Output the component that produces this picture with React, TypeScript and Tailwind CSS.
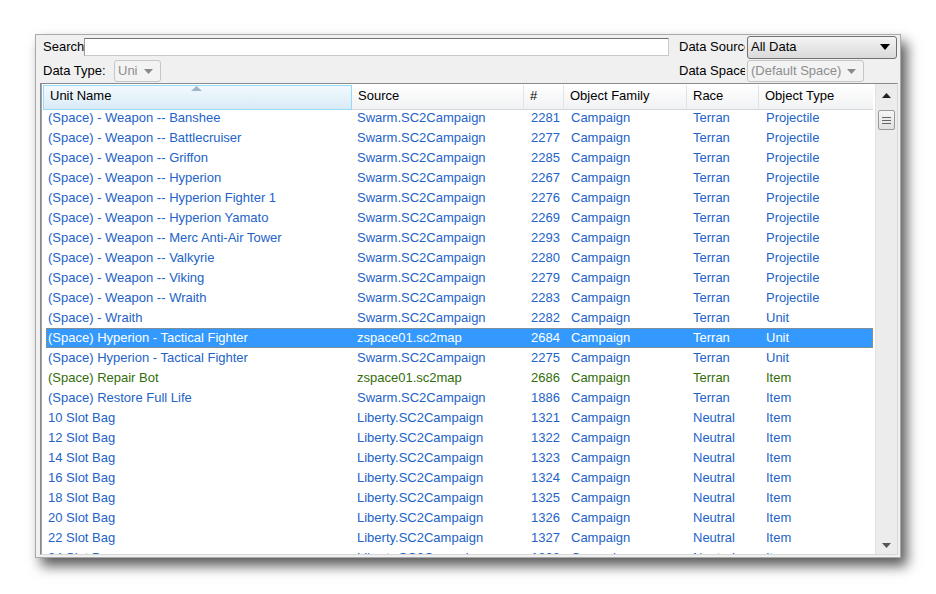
import React from "react"

type Row = {
  name: string
  source: string
  id: string
  family: string
  race: string
  type: string
  tone?: "green"
  selected?: boolean
}

const rows: Row[] = [
  { name: "(Space) - Weapon -- Banshee", source: "Swarm.SC2Campaign", id: "2281", family: "Campaign", race: "Terran", type: "Projectile" },
  { name: "(Space) - Weapon -- Battlecruiser", source: "Swarm.SC2Campaign", id: "2277", family: "Campaign", race: "Terran", type: "Projectile" },
  { name: "(Space) - Weapon -- Griffon", source: "Swarm.SC2Campaign", id: "2285", family: "Campaign", race: "Terran", type: "Projectile" },
  { name: "(Space) - Weapon -- Hyperion", source: "Swarm.SC2Campaign", id: "2267", family: "Campaign", race: "Terran", type: "Projectile" },
  { name: "(Space) - Weapon -- Hyperion Fighter 1", source: "Swarm.SC2Campaign", id: "2276", family: "Campaign", race: "Terran", type: "Projectile" },
  { name: "(Space) - Weapon -- Hyperion Yamato", source: "Swarm.SC2Campaign", id: "2269", family: "Campaign", race: "Terran", type: "Projectile" },
  { name: "(Space) - Weapon -- Merc Anti-Air Tower", source: "Swarm.SC2Campaign", id: "2293", family: "Campaign", race: "Terran", type: "Projectile" },
  { name: "(Space) - Weapon -- Valkyrie", source: "Swarm.SC2Campaign", id: "2280", family: "Campaign", race: "Terran", type: "Projectile" },
  { name: "(Space) - Weapon -- Viking", source: "Swarm.SC2Campaign", id: "2279", family: "Campaign", race: "Terran", type: "Projectile" },
  { name: "(Space) - Weapon -- Wraith", source: "Swarm.SC2Campaign", id: "2283", family: "Campaign", race: "Terran", type: "Projectile" },
  { name: "(Space) - Wraith", source: "Swarm.SC2Campaign", id: "2282", family: "Campaign", race: "Terran", type: "Unit" },
  { name: "(Space) Hyperion - Tactical Fighter", source: "zspace01.sc2map", id: "2684", family: "Campaign", race: "Terran", type: "Unit", selected: true },
  { name: "(Space) Hyperion - Tactical Fighter", source: "Swarm.SC2Campaign", id: "2275", family: "Campaign", race: "Terran", type: "Unit" },
  { name: "(Space) Repair Bot", source: "zspace01.sc2map", id: "2686", family: "Campaign", race: "Terran", type: "Item", tone: "green" },
  { name: "(Space) Restore Full Life", source: "Swarm.SC2Campaign", id: "1886", family: "Campaign", race: "Terran", type: "Item" },
  { name: "10 Slot Bag", source: "Liberty.SC2Campaign", id: "1321", family: "Campaign", race: "Neutral", type: "Item" },
  { name: "12 Slot Bag", source: "Liberty.SC2Campaign", id: "1322", family: "Campaign", race: "Neutral", type: "Item" },
  { name: "14 Slot Bag", source: "Liberty.SC2Campaign", id: "1323", family: "Campaign", race: "Neutral", type: "Item" },
  { name: "16 Slot Bag", source: "Liberty.SC2Campaign", id: "1324", family: "Campaign", race: "Neutral", type: "Item" },
  { name: "18 Slot Bag", source: "Liberty.SC2Campaign", id: "1325", family: "Campaign", race: "Neutral", type: "Item" },
  { name: "20 Slot Bag", source: "Liberty.SC2Campaign", id: "1326", family: "Campaign", race: "Neutral", type: "Item" },
  { name: "22 Slot Bag", source: "Liberty.SC2Campaign", id: "1327", family: "Campaign", race: "Neutral", type: "Item" },
  { name: "24 Slot Bag", source: "Liberty.SC2Campaign", id: "1328", family: "Campaign", race: "Neutral", type: "Item" },
]

const headCols = "grid grid-cols-[309px_172px_40px_123px_72px_115px]"
const rowCols = "grid grid-cols-[306px_172px_40px_123px_72px_115px]"

function Arrow({ color = "#000", w = 9, h = 5 }: { color?: string; w?: number; h?: number }) {
  return (
    <svg width={w} height={h} viewBox={`0 0 ${w} ${h}`}>
      <polygon points={`0,0 ${w},0 ${w / 2},${h}`} fill={color} />
    </svg>
  )
}

function Combo({ text, width }: { text: string; width: string }) {
  return (
    <div
      className={`${width} h-[22px] flex items-center justify-between pl-[3px] pr-[7px] rounded-[3px] border border-[#c3c6ca] bg-[#f3f3f3] text-[#8d8d8d] overflow-hidden whitespace-nowrap`}
    >
      <span className="overflow-hidden">{text}</span>
      <span className="ml-1 shrink-0">
        <Arrow color="#8a8a8a" w={9} h={5} />
      </span>
    </div>
  )
}

export default function App() {
  return (
    <div
      className="w-[936px] h-[594px] bg-white pt-[34px] pl-[35px] text-[13px] text-black"
      style={{ fontFamily: '"Liberation Sans", Arial, sans-serif' }}
    >
      <div className="w-[866px] h-[524px] bg-[#f0f0f0] border border-[#a9a9a9] shadow-[6px_8px_12px_rgba(0,0,0,0.65)] flex flex-col">
        {/* filters */}
        <div className="flex items-center h-[24px] pl-[7px]">
          <span className="w-[42px] overflow-hidden whitespace-nowrap">Search</span>
          <div className="-ml-[1px] w-[585px] h-[18px] bg-white border border-[#c8c8c8] border-t-[#707070] border-l-[#9a9a9a]" />
          <span className="ml-[10px] mr-[2px] w-[66px] overflow-hidden whitespace-nowrap">Data Source</span>
          <div className="w-[150px] h-[23px] flex items-center justify-between pl-[3px] pr-[6px] rounded-[3px] border border-[#707070] bg-gradient-to-b from-[#f4f4f4] to-[#dadada]">
            <span>All Data</span>
            <Arrow w={10} h={6} />
          </div>
        </div>
        <div className="flex items-center h-[24px] pl-[7px]">
          <span className="w-[71px] whitespace-nowrap">Data Type:</span>
          <Combo text="Uni" width="w-[47px]" />
          <span className="ml-[518px] mr-[2px] w-[66px] overflow-hidden whitespace-nowrap">Data Space</span>
          <Combo text="(Default Space)" width="w-[117px]" />
        </div>

        {/* list */}
        <div className="ml-[4px] mr-[2px] flex-1 border border-[#8a8a8a] border-r-[#d8d8d8] border-b-[#d8d8d8] bg-white flex overflow-hidden">
          <div className="flex-1 flex flex-col pl-[1px] border-l border-[#a0a0a0] overflow-hidden">
            <div className={`${headCols} h-[23px] mt-[1px] shrink-0`}>
              <div className="relative flex items-end pb-[3px] pl-[6px] bg-gradient-to-b from-[#f2f9fd] to-[#d9ebf7] border border-[#96d9f9]">
                Unit Name
                <span className="absolute left-[147px] top-[0px]">
                  <svg width="11" height="5" viewBox="0 0 11 5">
                    <polygon points="0,5 11,5 5.5,0" fill="#9db6c8" />
                  </svg>
                </span>
              </div>
              {["Source", "#", "Object Family", "Race", "Object Type"].map((h) => (
                <div
                  key={h}
                  className="flex items-end pb-[3px] pl-[6px] bg-gradient-to-b from-white to-[#f1f2f3] border-b border-[#d5d5d5] border-r border-r-[#e3e4e5]"
                >
                  {h}
                </div>
              ))}
            </div>
            <div className="flex flex-col pl-[3px]">
              {rows.map((r, i) => {
                const color = r.selected ? "text-white" : r.tone === "green" ? "text-[#326d0a]" : "text-[#2363c8]"
                return (
                  <div
                    key={i}
                    className={`${rowCols} h-[20px] items-center shrink-0 ${color} ${
                      r.selected ? "bg-[#3399ff] outline outline-1 outline-dotted outline-[#c9863c] -outline-offset-1" : ""
                    } whitespace-nowrap`}
                  >
                    <span className="pl-[2px]">{r.name}</span>
                    <span className="pl-[5px]">{r.source}</span>
                    <span className="pl-[7px]">{r.id}</span>
                    <span className="pl-[7px]">{r.family}</span>
                    <span className="pl-[6px]">{r.race}</span>
                    <span className="pl-[7px]">{r.type}</span>
                  </div>
                )
              })}
            </div>
          </div>

          {/* scrollbar */}
          <div className="w-[22px] ml-[2px] bg-[#ececec] border-l border-[#e2e2e2] flex flex-col items-center">
            <div className="h-[22px] flex items-center justify-center">
              <svg width="9" height="5" viewBox="0 0 9 5">
                <polygon points="0,5 9,5 4.5,0" fill="#222" />
              </svg>
            </div>
            <div className="mt-[4px] w-[17px] h-[20px] rounded-[2px] border border-[#9a9a9a] bg-gradient-to-b from-[#f6f6f6] to-[#e0e0e0] flex flex-col items-center justify-center gap-[2px]">
              <div className="w-[9px] h-[1px] bg-[#666]" />
              <div className="w-[9px] h-[1px] bg-[#666]" />
              <div className="w-[9px] h-[1px] bg-[#666]" />
            </div>
            <div className="flex-1" />
            <div className="h-[18px] flex items-center justify-center">
              <svg width="9" height="5" viewBox="0 0 9 5">
                <polygon points="0,0 9,0 4.5,5" fill="#555" />
              </svg>
            </div>
          </div>
        </div>
        <div className="h-[2px]" />
      </div>
    </div>
  )
}
